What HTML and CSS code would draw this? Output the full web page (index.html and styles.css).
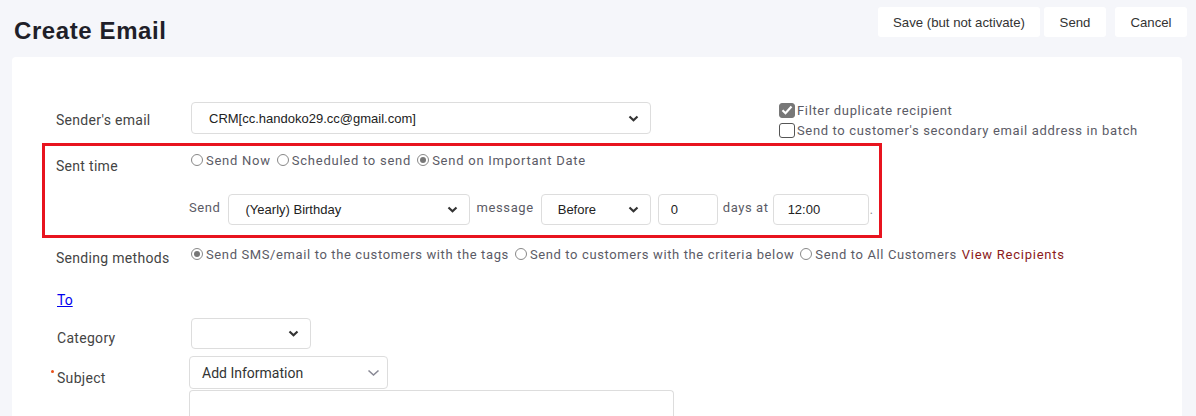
FILE: index.html
```html
<!DOCTYPE html>
<html lang="en">
<head>
  <meta charset="UTF-8" />
  <title>Create Email</title>
  <link rel="stylesheet" href="styles.css">
</head>
<body>

  <div class="page-head">
    <h1>Create Email</h1>
    <div class="actions">
      <button class="btn btn-save">Save (but not activate)</button>
      <button class="btn btn-send">Send</button>
      <button class="btn btn-cancel">Cancel</button>
    </div>
  </div>

  <div class="card">

    <!-- sender -->
    <div class="row row-sender">
      <div class="label">Sender's email</div>
      <div class="select sel-sender">
        <span>CRM[cc.handoko29.cc@gmail.com]</span>
        <svg class="chev" width="11" height="7" viewBox="0 0 11 7"><path d="M1.5 1.5 L5.5 5.2 L9.5 1.5" fill="none" stroke="#333" stroke-width="2.2"/></svg>
      </div>
      <div class="checks">
        <div class="check-line"><span class="cb cb-on"><svg width="12" height="10" viewBox="0 0 12 10"><path d="M1.5 5.2 L4.5 8.2 L10.5 1.5" fill="none" stroke="#fff" stroke-width="2.2"/></svg></span>Filter duplicate recipient</div>
        <div class="check-line"><span class="cb"></span>Send to customer's secondary email address in batch</div>
      </div>
    </div>

    <!-- sent time (highlighted) -->
    <div class="highlight">
      <div class="label label-sent">Sent time</div>
      <div class="sent-body">
        <div class="radios">
          <label class="radio"><span class="dot"></span>Send Now</label>
          <label class="radio"><span class="dot"></span>Scheduled to send</label>
          <label class="radio"><span class="dot dot-on"></span>Send on Important Date</label>
        </div>
        <div class="when">
          <span class="word">Send</span>
          <div class="select sel-event">
            <span>(Yearly) Birthday</span>
            <svg class="chev" width="11" height="7" viewBox="0 0 11 7"><path d="M1.5 1.5 L5.5 5.2 L9.5 1.5" fill="none" stroke="#333" stroke-width="2.2"/></svg>
          </div>
          <span class="word">message</span>
          <div class="select sel-before">
            <span>Before</span>
            <svg class="chev" width="11" height="7" viewBox="0 0 11 7"><path d="M1.5 1.5 L5.5 5.2 L9.5 1.5" fill="none" stroke="#333" stroke-width="2.2"/></svg>
          </div>
          <div class="input inp-days">0</div>
          <span class="word word-days">days at</span>
          <div class="input inp-time">12:00</div>
          <span class="stop">.</span>
        </div>
      </div>
    </div>

    <!-- methods -->
    <div class="row row-methods">
      <div class="label label-methods">Sending methods</div>
      <div class="radios radios-methods">
        <label class="radio"><span class="dot dot-on"></span>Send SMS/email to the customers with the tags</label>
        <label class="radio"><span class="dot"></span>Send to customers with the criteria below</label>
        <label class="radio"><span class="dot"></span>Send to All Customers</label>
        <a class="view-link" href="#">View Recipients</a>
      </div>
    </div>

    <div class="row row-to">
      <a class="to-link" href="#">To</a>
    </div>

    <div class="row row-category">
      <div class="label label-low">Category</div>
      <div class="select sel-category">
        <span></span>
        <svg class="chev" width="11" height="7" viewBox="0 0 11 7"><path d="M1.5 1.5 L5.5 5.2 L9.5 1.5" fill="none" stroke="#333" stroke-width="2.2"/></svg>
      </div>
    </div>

    <div class="row row-subject">
      <div class="label label-low label-req">Subject</div>
      <div class="dropdown">
        <span>Add Information</span>
        <svg width="13" height="8" viewBox="0 0 13 8"><path d="M1.5 1.5 L6.5 6 L11.5 1.5" fill="none" stroke="#8a8a96" stroke-width="1.6"/></svg>
      </div>
    </div>

    <div class="row row-editor">
      <div class="editor"></div>
    </div>

  </div>

</body>
</html>
```

FILE: styles.css
```css
body {
  margin: 0;
  background-color: #f5f6fa;
  font-family: Roboto, "Liberation Sans", Arial, sans-serif;
  color: #444;
  overflow: hidden;
}

.page-head {
  height: 57px;
  display: flex;
  justify-content: space-between;
  padding: 0 9px 0 14px;
}

h1 {
  margin: 17px 0 0;
  font-family: "Liberation Sans", Arial, sans-serif;
  font-size: 24px;
  font-weight: bold;
  letter-spacing: 0.6px;
  color: #1f1f29;
}

.actions {
  display: flex;
  margin-top: 7px;
}

.btn {
  height: 30px;
  background: #fff;
  border: none;
  border-radius: 3px;
  font-family: "Liberation Sans", Arial, sans-serif;
  font-size: 13.2px;
  color: #333;
  padding: 0;
}

.btn-save { width: 162px; }
.btn-send { width: 62px; margin-left: 4px; }
.btn-cancel { width: 72px; margin-left: 9px; }

.card {
  margin: 0 14px 0 12px;
  height: 400px;
  background: #fff;
  border-radius: 4px 4px 0 0;
  padding: 45px 0 0 44px;
}

.row {
  display: flex;
  align-items: center;
}

.label {
  width: 135px;
  flex-shrink: 0;
  font-size: 14px;
  letter-spacing: 0.3px;
  color: #444;
}

/* selects / inputs */
.select, .input, .dropdown {
  box-sizing: border-box;
  border: 1px solid #ddd;
  border-radius: 4px;
  display: flex;
  align-items: center;
  font-family: "Liberation Sans", Arial, sans-serif;
  font-size: 13px;
  color: #222;
  background: #fff;
}

.select {
  justify-content: space-between;
  padding: 0 11px 0 17px;
}

.row-sender { height: 32px; }
.row-sender .label { padding-top: 4px; }

.sel-sender { width: 460px; height: 32px; }

.checks {
  align-self: flex-start;
  margin: -1px 0 0 128px;
  font-size: 13px;
  letter-spacing: 0.65px;
  color: #5b5b66;
}

.check-line {
  display: flex;
  align-items: center;
  height: 18px;
  margin-bottom: 2px;
}

.cb {
  box-sizing: border-box;
  width: 16px;
  height: 15px;
  margin-right: 2px;
  border: 1px solid #555;
  border-radius: 3px;
  display: flex;
  align-items: center;
  justify-content: center;
}

.cb-on {
  background: #777;
  border-color: #777;
}

/* red box around sent time */
.highlight {
  display: flex;
  align-items: flex-start;
  width: 823px;
  margin: 9px 0 0 -14px;
  border: 3px solid #e8141f;
  padding: 0 0 10px 11px;
}

.label-sent {
  margin-top: 12px;
  line-height: 16px;
}

.radios {
  display: flex;
  align-items: center;
  height: 16px;
  font-size: 13px;
  letter-spacing: 0.75px;
  color: #5b5b66;
}

.radios-methods { letter-spacing: 0.62px; }

.sent-body .radios { margin-top: 6px; }

.radio {
  display: flex;
  align-items: center;
  margin-right: 6px;
}

.dot {
  box-sizing: border-box;
  width: 12px;
  height: 12px;
  border: 1px solid #888;
  border-radius: 50%;
  margin-right: 3px;
  display: flex;
  align-items: center;
  justify-content: center;
}

.dot-on::after {
  content: "";
  width: 6px;
  height: 6px;
  border-radius: 50%;
  background: #777;
}

.when {
  display: flex;
  align-items: center;
  height: 31px;
  margin-top: 26px;
  margin-left: -2px;
}

.word {
  font-size: 13px;
  letter-spacing: 0.6px;
  color: #5b5b66;
  margin-right: 7px;
  position: relative;
  top: -2px;
}

.word-days { margin-right: 4px; }

.sel-event { width: 242px; height: 31px; margin-right: 7px; }
.sel-before { width: 110px; height: 31px; padding-left: 16px; margin-right: 7px; }

.input {
  height: 31px;
  margin-right: 5px;
}

.inp-days { width: 60px; padding-left: 12px; }
.inp-time { width: 96px; padding-left: 14px; margin-right: 1px; }

.stop { color: #888; font-size: 12px; }

/* methods */
.row-methods {
  height: 16px;
  margin-top: 8px;
}

.label-methods { padding-top: 7px; }

.view-link {
  color: #8b1a1a;
  text-decoration: none;
  letter-spacing: 0.75px;
  margin-left: -1px;
}

.row-to {
  height: 16px;
  margin-top: 30px;
}

.to-link {
  color: #0000ee;
  font-size: 14px;
  margin-left: 1px;
}

.row-category {
  height: 31px;
  margin-top: 10px;
}

.label-low { padding-top: 9px; margin-left: 1px; width: 134px; }

.sel-category { width: 120px; height: 31px; }

.row-subject {
  height: 33px;
  margin-top: 7px;
}

.row-subject .label-low { padding-top: 11px; }

.label-req { position: relative; }

.label-req::before {
  content: "";
  position: absolute;
  left: -6px;
  top: 11px;
  width: 3px;
  height: 3px;
  border-radius: 50%;
  background: #e8501a;
}

.dropdown {
  width: 199px;
  height: 33px;
  margin-left: -2px;
  justify-content: space-between;
  padding: 0 7px 0 12px;
  font-family: Roboto, "Liberation Sans", Arial, sans-serif;
  font-size: 14px;
  color: #333;
}

.row-editor { margin-top: 1px; }

.editor {
  box-sizing: border-box;
  width: 485px;
  height: 40px;
  margin-left: 133px;
  border: 1px solid #ddd;
  border-bottom: none;
  border-radius: 4px 4px 0 0;
}
```
